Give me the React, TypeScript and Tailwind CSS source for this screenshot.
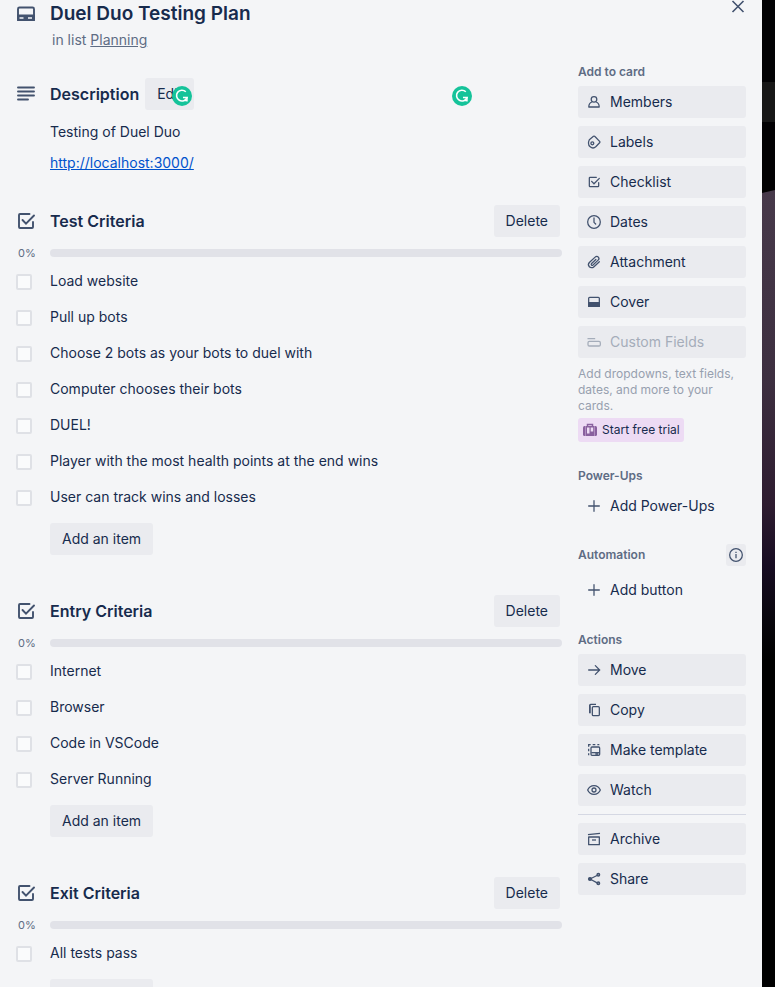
import type { ReactNode } from "react";

type IconProps = { className?: string; children: ReactNode; width?: number };

function Icon({ className = "size-4", children, width = 1.9 }: IconProps) {
  return (
    <svg
      viewBox="0 0 24 24"
      className={`shrink-0 ${className}`}
      fill="none"
      stroke="currentColor"
      strokeWidth={width}
      aria-hidden="true"
    >
      {children}
    </svg>
  );
}

const checklistShape = (
  <>
    <path d="M15.500 5H6a1 1 0 0 0-1 1v12a1 1 0 0 0 1 1h12a1 1 0 0 0 1-1v-5" strokeLinecap="round" />
    <path d="M8.500 11l3.500 3.700L20 6.500" strokeLinecap="round" />
  </>
);

const icons = {
  members: (
    <Icon>
      <circle cx="12" cy="8" r="4.200" />
      <path d="M9 12c-3 1-4.800 3.500-4.800 7.500h15.600c0-4-1.800-6.500-4.800-7.500" strokeLinejoin="round" />
    </Icon>
  ),
  labels: (
    <Icon>
      <path d="M4 11.500l1-3 6.200-5a1.600 1.600 0 0 1 2.200.2l7 7.300a1.600 1.600 0 0 1 0 2.200L15 18.800c-2.800 2.700-6.200 2.500-8.700.4-2.400-2-2.900-4.900-2.300-7.700z" strokeLinejoin="round" />
      <circle cx="9.500" cy="14" r="2.200" />
    </Icon>
  ),
  checklist: <Icon>{checklistShape}</Icon>,
  dates: (
    <Icon>
      <circle cx="12" cy="12" r="9.500" />
      <path d="M12 6v6.500l2.500 2.500" strokeLinecap="round" />
    </Icon>
  ),
  attachment: (
    <Icon>
      <path d="M20 11.500l-8 7.500c-2.300 2.200-5.300 2-7 .2-1.800-1.900-1.700-4.700.4-6.700l8.300-7.800c1.500-1.400 3.600-1.300 4.800 0 1.200 1.300 1.100 3.200-.3 4.500l-7.700 7.200c-.8.7-1.700.7-2.300.1-.6-.7-.5-1.600.2-2.300l6.400-6" strokeLinecap="round" />
    </Icon>
  ),
  cover: (
    <Icon>
      <rect x="4" y="5" width="16" height="13.500" rx="1.500" />
      <path d="M4 13h16v5.500H4z" fill="currentColor" />
    </Icon>
  ),
  fields: (
    <Icon>
      <path d="M3 7h10" strokeLinecap="round" />
      <rect x="3" y="11" width="18.500" height="7" rx="2" />
    </Icon>
  ),
  plus: (
    <Icon>
      <path d="M12 4v16M4 12h16" strokeLinecap="round" />
    </Icon>
  ),
  move: (
    <Icon>
      <path d="M4 12h16M14 5.500l6.500 6.500-6.500 6.500" strokeLinecap="round" />
    </Icon>
  ),
  copy: (
    <Icon>
      <path d="M5.500 17V5A1.500 1.500 0 0 1 7 3.500h8" />
      <path d="M6.500 5v12" strokeOpacity="0.700" />
      <rect x="9.500" y="7" width="10.500" height="13.500" rx="1.500" />
    </Icon>
  ),
  template: (
    <Icon>
      <path d="M4 20v-3M4 14v-4M4 7V4h3M10 4h4M17 4h3" />
      <rect x="7.500" y="7.500" width="13" height="12.500" rx="1.500" />
      <path d="M8 16h12" />
      <path d="M14 18h4.500" strokeWidth="2.500" />
    </Icon>
  ),
  watch: (
    <Icon>
      <path d="M2.500 12c2-4.500 5.200-6.500 9.500-6.500s7.500 2 9.500 6.500c-2 4.500-5.200 6.500-9.500 6.500S4.500 16.500 2.500 12z" strokeLinejoin="round" />
      <circle cx="12" cy="12" r="3" />
    </Icon>
  ),
  archive: (
    <Icon>
      <path d="M3 5.500L21 3.500" />
      <path d="M4 9h16v11.500H4z" strokeLinejoin="round" />
      <path d="M9 13.500h6" />
    </Icon>
  ),
  share: (
    <Icon>
      <path d="M6 12l12-6M6 12l12 6.500" />
      <circle cx="6" cy="12" r="2.200" fill="currentColor" />
      <circle cx="18.500" cy="5.500" r="2" fill="currentColor" fillOpacity="0.600" />
      <circle cx="18.500" cy="18.500" r="2" fill="currentColor" fillOpacity="0.600" />
    </Icon>
  ),
};

function GrammarBadge({ className }: { className: string }) {
  return (
    <svg viewBox="0 0 20 20" className={`absolute size-5 ${className}`} aria-hidden="true">
      <circle cx="10" cy="10" r="10" fill="#15c39a" />
      <path d="M13.800 5.800A5.400 5.400 0 1 0 15 11.500H11" fill="none" stroke="#fff" strokeWidth="1.600" />
      <path d="M15 11v4.500M12.500 14.500h2.500" fill="none" stroke="#fff" strokeWidth="1.400" />
    </svg>
  );
}

function GrayButton({ children }: { children: ReactNode }) {
  return (
    <button type="button" className="h-8 rounded-[3px] bg-[#eaebef] px-3 text-sm whitespace-nowrap">
      {children}
    </button>
  );
}

function Checklist({ title, items }: { title: string; items: string[] }) {
  return (
    <section className="mb-10">
      <div className="flex items-center pr-0.5">
        <Icon className="mr-3 ml-[-2px] size-6 text-[#42526e]">{checklistShape}</Icon>
        <h2 className="flex-1 text-base font-semibold">{title}</h2>
        <GrayButton>Delete</GrayButton>
      </div>
      <div className="mt-2 flex h-4 items-center">
        <span className="w-[34px] pl-0.5 text-[11px] text-[#5e6c84]">0%</span>
        <div
          role="progressbar"
          aria-label={title}
          aria-valuenow={0}
          className="h-2 flex-1 rounded-full bg-[#e1e2e8]"
        />
      </div>
      <ul className="pt-0.5">
        {items.map((item) => (
          <li key={item}>
            <label className="flex h-9 items-center">
              <input
                type="checkbox"
                className="mt-0.5 mr-[18px] size-4 shrink-0 appearance-none rounded-[2px] border-2 border-[#dfe1e6] bg-[#fafbfc] checked:bg-[#0079bf]"
              />
              <span className="text-sm">{item}</span>
            </label>
          </li>
        ))}
      </ul>
      <div className="mt-2 pl-[34px]">
        <GrayButton>Add an item</GrayButton>
      </div>
    </section>
  );
}

type SideButtonProps = { icon: ReactNode; label: string; plain?: boolean; disabled?: boolean };

function SideButton({ icon, label, plain, disabled }: SideButtonProps) {
  return (
    <button
      type="button"
      disabled={disabled}
      className={`flex h-8 w-full shrink-0 items-center gap-2 rounded-[3px] px-2 text-left text-sm ${
        plain ? "" : "bg-[#eaebef]"
      } ${disabled ? "text-[#a5adba]" : ""}`}
    >
      <span className={disabled ? "" : "text-[#42526e]"}>{icon}</span>
      {label}
    </button>
  );
}

function SideHeading({ children }: { children: ReactNode }) {
  return <h3 className="text-xs leading-4 font-semibold text-[#5e6c84]">{children}</h3>;
}

function Sidebar() {
  return (
    <aside className="w-[168px] shrink-0 pt-3.5">
      <SideHeading>Add to card</SideHeading>
      <div className="mt-1.5 flex flex-col gap-2">
        <SideButton icon={icons.members} label="Members" />
        <SideButton icon={icons.labels} label="Labels" />
        <SideButton icon={icons.checklist} label="Checklist" />
        <SideButton icon={icons.dates} label="Dates" />
        <SideButton icon={icons.attachment} label="Attachment" />
        <SideButton icon={icons.cover} label="Cover" />
        <SideButton icon={icons.fields} label="Custom Fields" disabled />
      </div>
      <p className="mt-2 text-xs leading-4 text-[#97a0af]">
        Add dropdowns, text fields, dates, and more to your cards.
      </p>
      <button
        type="button"
        className="mt-1 flex h-6 items-center gap-1 rounded-[3px] bg-[#eddbf4] px-1 text-xs whitespace-nowrap"
      >
        <svg viewBox="0 0 16 16" className="size-4 shrink-0" fill="none" stroke="#89609e" aria-hidden="true">
          <rect x="1" y="4" width="14" height="10" rx="1.500" fill="#89609e" stroke="none" />
          <path d="M5.500 4V2.500h5V4" strokeWidth="1.500" />
          <path d="M3.500 4v10M12.500 4v10" stroke="#c9a9d6" strokeWidth="0.600" />
          <path d="M5 5.500h2.500v6H5zM8.700 5.500h2.500v4H8.700z" fill="#eddbf4" stroke="none" />
        </svg>
        Start free trial
      </button>

      <div className="mt-[26px]">
        <SideHeading>Power-Ups</SideHeading>
        <div className="mt-1.5">
          <SideButton icon={icons.plus} label="Add Power-Ups" plain />
        </div>
      </div>

      <div className="mt-[22px]">
        <div className="flex items-center justify-between">
          <SideHeading>Automation</SideHeading>
          <button
            type="button"
            aria-label="About automation"
            className="flex h-[22px] w-5 items-center justify-center rounded-[3px] bg-[#eaebef] text-[#42526e]"
          >
            <Icon>
              <circle cx="12" cy="12" r="9.500" />
              <path d="M12 10.500V17M12 7v2" />
            </Icon>
          </button>
        </div>
        <div className="mt-2">
          <SideButton icon={icons.plus} label="Add button" plain />
        </div>
      </div>

      <div className="mt-[26px]">
        <SideHeading>Actions</SideHeading>
        <div className="mt-1.5 flex flex-col gap-2">
          <SideButton icon={icons.move} label="Move" />
          <SideButton icon={icons.copy} label="Copy" />
          <SideButton icon={icons.template} label="Make template" />
          <SideButton icon={icons.watch} label="Watch" />
          <hr className="border-[#d5d8e3]" />
          <SideButton icon={icons.archive} label="Archive" />
          <SideButton icon={icons.share} label="Share" />
        </div>
      </div>
    </aside>
  );
}

function Header() {
  return (
    <header className="flex items-start pt-0.5">
      <Icon className="mr-3 ml-[-2px] size-6 text-[#42526e]">
        <rect x="4" y="5.500" width="16" height="12.500" rx="1.500" />
        <path d="M4 13.500h16V18H4z" fill="currentColor" />
        <path d="M5.500 16h4M14 16h4" stroke="#f4f5f7" strokeWidth="1.500" />
      </Icon>
      <div className="flex-1">
        <h1 className="text-[19px] leading-6 font-semibold">Duel Duo Testing Plan</h1>
        <p className="mt-1 pl-0.5 text-sm text-[#5e6c84]">
          in list{" "}
          <a href="#planning" className="underline">
            Planning
          </a>
        </p>
      </div>
      <button type="button" aria-label="Close" className="flex w-4 justify-center text-[#42526e]">
        <svg viewBox="0 1 12 12" className="h-3 w-3 overflow-visible" fill="none" stroke="currentColor" strokeWidth="1.600" aria-hidden="true">
          <path d="M0.500 0l11 11M11.500 0l-11 11" />
        </svg>
      </button>
    </header>
  );
}

function Description() {
  return (
    <section className="relative">
      <div className="flex h-8 items-center">
        <Icon className="mr-3 ml-[-2px] size-6 text-[#42526e]">
          <path d="M4 5.500h16M4 9.500h16M4 13.500h16M4 17.500h10" strokeLinecap="round" />
        </Icon>
        <h2 className="text-base font-semibold">Description</h2>
        <div className="relative ml-1.5">
          <GrayButton>Edit</GrayButton>
          <GrammarBadge className="top-2 right-0.5" />
        </div>
      </div>
      <GrammarBadge className="top-2 right-[90px]" />
      <div className="mt-3 pl-[34px] text-sm">
        <p>Testing of Duel Duo</p>
        <p className="mt-[11px]">
          <a href="http://localhost:3000/" className="text-[#0052cc] underline">
            http://localhost:3000/
          </a>
        </p>
      </div>
    </section>
  );
}

export default function App() {
  return (
    <div className="flex h-screen overflow-hidden bg-black font-['Inter','Liberation_Sans',sans-serif] text-[#172b4d]">
      <main className="min-w-0 flex-1 overflow-hidden bg-[#f4f5f7] px-4">
        <Header />
        <div className="flex gap-4">
          <div className="min-w-0 flex-1 pt-7">
            <Description />
            <div className="mt-8">
              <Checklist
                title="Test Criteria"
                items={[
                  "Load website",
                  "Pull up bots",
                  "Choose 2 bots as your bots to duel with",
                  "Computer chooses their bots",
                  "DUEL!",
                  "Player with the most health points at the end wins",
                  "User can track wins and losses",
                ]}
              />
              <Checklist
                title="Entry Criteria"
                items={["Internet", "Browser", "Code in VSCode", "Server Running"]}
              />
              <Checklist title="Exit Criteria" items={["All tests pass"]} />
            </div>
          </div>
          <Sidebar />
        </div>
      </main>
      <div className="flex w-[13px] shrink-0 flex-col">
        <div className="h-[82px] bg-[#020204]" />
        <div className="h-10 bg-[#171717]" />
        <div className="h-[68px] bg-[#020103]" />
        <div className="h-[470px] bg-[linear-gradient(to_bottom,#47394a_0%,#3d2f40_40%,#2e1c30_67%,#170c22_80%,#08060c_92%,#000000_100%)] [clip-path:polygon(0_3px,100%_0,100%_100%,0_100%)]" />
      </div>
    </div>
  );
}
